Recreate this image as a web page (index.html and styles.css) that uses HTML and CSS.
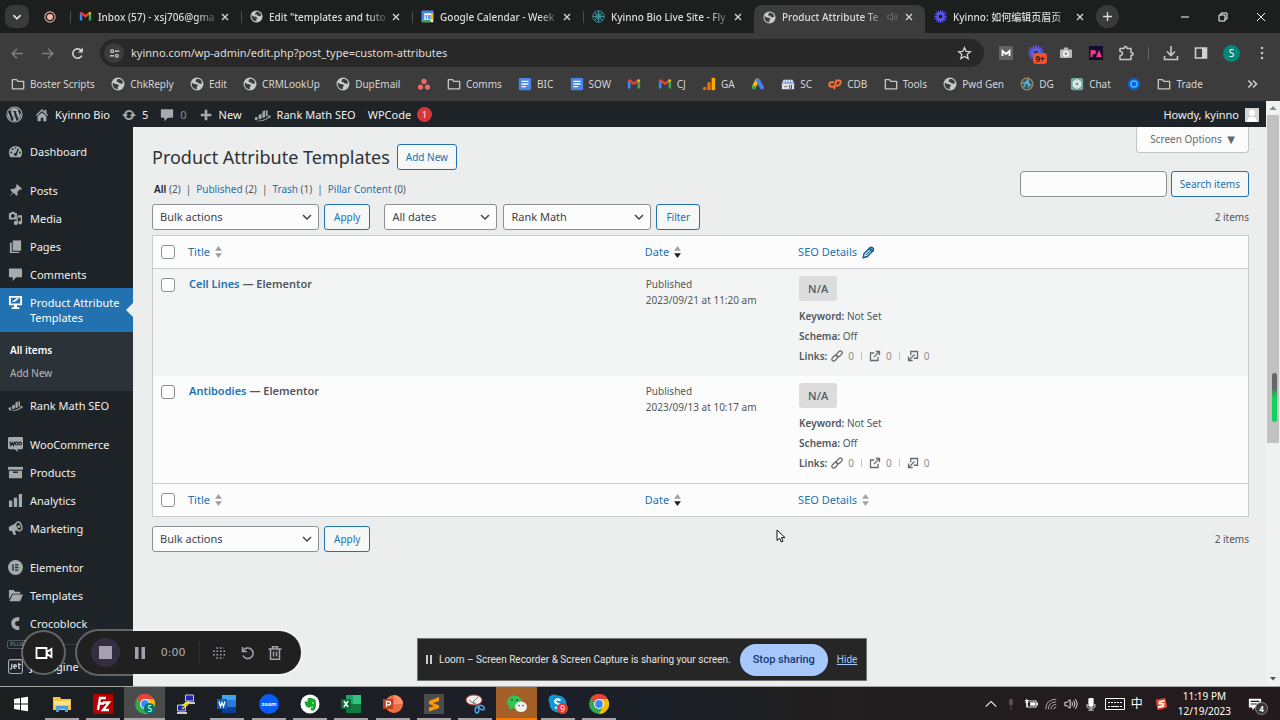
FILE: index.html
```html
<!DOCTYPE html>
<html lang="en">
<head>
  <meta charset="UTF-8" />
  <meta name="viewport" content="width=device-width, initial-scale=1.0"/>
  <title>Product Attribute Templates</title>
  <link rel="stylesheet" href="styles.css">
</head>
<body>
  <!-- Shared icons -->
  <svg class="sprite" aria-hidden="true">
    <symbol id="globe" viewBox="0 0 16 16"><circle cx="8" cy="8" r="7.4" fill="#c7cacb"/><path d="M2.2 6.2 4.6 8l3 .3 1.600 1.800-1.500 1.200.2 2.600c-3.500 0-6-2.600-6-5.700zM7.200 2.200h3.200l2.600 2.200.8 2.600-1.800.8-2.400-.8-1.400-1.400-2 .2z" fill="#3c3c3c"/></symbol>
    <symbol id="folder" viewBox="0 0 16 16"><path d="M1.500 3h4.800l1.500 2h6.700v8.500h-13z" fill="none" stroke="#c7c7c7" stroke-width="1.500" stroke-linejoin="round"/></symbol>
    <symbol id="gmail" viewBox="0 0 16 16"><path d="M1 13V4l3 2.300V13z" fill="#4285f4"/><path d="M15 13V4l-3 2.300V13z" fill="#34a853"/><path d="M1 4.500C1 2.500 3 2 4.200 3L8 5.900 11.800 3 12 6.300 8 9.400 4 6.300 1 4.500z" fill="#ea4335"/><path d="M11.800 3C13 2 15 2.500 15 4.500l-3 2z" fill="#fbbc04"/></symbol>
    <symbol id="doc" viewBox="0 0 16 16"><rect x="1" y="1" width="14" height="14" rx="1.500" fill="#4a86e8"/><path d="M4 5h8M4 8h8M4 11h5" stroke="#fff" stroke-width="1.600"/></symbol>
    <symbol id="close" viewBox="0 0 10 10"><path d="m2 2 6 6m0-6L2 8" stroke="#d8d8d8" stroke-width="1.300"/></symbol>
    <symbol id="burst" viewBox="0 0 16 16"><g stroke="#625df5" stroke-width="1.500" stroke-linecap="round"><path d="M8 1v4M8 11v4M1 8h4M11 8h4M3 3l2.800 2.800M10.200 10.200 13 13M3 13l2.800-2.800M10.200 5.800 13 3M5.300 1.500l1.500 3.700M9.200 10.800l1.500 3.700M1.500 10.700l3.700-1.500M10.800 6.800l3.700-1.500M1.500 5.300l3.700 1.500M10.800 9.200l3.700 1.500M5.300 14.500l1.500-3.700M9.200 5.200l1.500-3.700"/></g></symbol>
    <symbol id="rank" viewBox="0 0 20 16"><path d="M1 14v-3l3-1v4zM5.500 13V8L9 6.500V12zM10 11.500V4l3-1.500v8zM14 10V3l2-1v7z"/><path d="M1 15c7 0 12-1.500 16-5l-1-1 3.500-.5L19 12l-1-1c-4 3.500-9 5-17 4z"/></symbol>
    <symbol id="comment" viewBox="0 0 16 16"><path d="M2 1.500h12q1 0 1 1V10q0 1-1 1H9l-4 4v-4H2q-1 0-1-1V2.500q0-1 1-1z"/></symbol>
    <symbol id="sort" viewBox="0 0 8 14"><path class="sort-up" d="M4 0 8 5.500H0z"/><path d="M4 14 0 8.500h8z"/></symbol>
    <symbol id="link" viewBox="0 0 16 16"><g fill="none" stroke="#666a6d" stroke-width="1.700"><rect x="6.500" y="2.700" width="9" height="5" rx="2.500" transform="rotate(-45 11 5.200)"/><rect x=".5" y="8.300" width="9" height="5" rx="2.500" transform="rotate(-45 5 10.800)"/></g></symbol>
    <symbol id="external" viewBox="0 0 16 16"><path d="M7 4H2v10h10V9M9 2h5v5M14 2 6.500 9.500" fill="none" stroke="#666a6d" stroke-width="1.700"/></symbol>
    <symbol id="incoming" viewBox="0 0 16 16"><path d="M5 7V2h9v9H9M2 8.500V14h5.500M2.500 13.500 10 6" fill="none" stroke="#666a6d" stroke-width="1.700"/></symbol>
    <symbol id="chrome" viewBox="0 0 20 20"><circle cx="10" cy="10" r="10" fill="#34a853"/><path d="M10 10 1.300 5A10 10 0 0 1 18.700 5z" fill="#ea4335"/><path d="M10 5h8.700A10 10 0 0 1 10 20l4.300-7.500z" fill="#fbbc04"/><circle cx="10" cy="10" r="5" fill="#fff"/><circle cx="10" cy="10" r="3.900" fill="#4285f4"/></symbol>
  </svg>

  <!-- Tab strip -->
  <div class="tab-strip">
    <button class="tab-search" aria-label="Search tabs"><svg viewBox="0 0 10 10"><path d="m2 3.500 3 3 3-3" fill="none" stroke="#ddd" stroke-width="1.500"/></svg></button>
    <div class="pinned"><svg viewBox="0 0 16 16"><circle cx="8" cy="8" r="6.800" fill="none" stroke="#e8a5a0" stroke-width="1.500"/><circle cx="8" cy="8" r="4" fill="#f1b4ae"/></svg></div>
    <div class="tab"><svg class="fav"><use href="#gmail"/></svg><span class="tab-title">Inbox (57) - xsj706@gma</span><button aria-label="Close"><svg><use href="#close"/></svg></button></div>
    <div class="tab"><svg class="fav"><use href="#globe"/></svg><span class="tab-title">Edit "templates and tuto</span><button aria-label="Close"><svg><use href="#close"/></svg></button></div>
    <div class="tab"><svg class="fav" viewBox="0 0 16 16"><path d="M1 1h14v14H1z" fill="#fff"/><path d="M1 1h14v3H1zM1 1h3v11H1z" fill="#4285f4"/><path d="M12 4h3v8h-3z" fill="#fbbc04"/><path d="M1 12h11v3H1z" fill="#34a853"/><text x="4" y="11" font-size="7" font-weight="700" fill="#1967d2">18</text></svg><span class="tab-title">Google Calendar - Week</span><button aria-label="Close"><svg><use href="#close"/></svg></button></div>
    <div class="tab"><svg class="fav" viewBox="0 0 16 16" fill="none" stroke="#47a7b3"><circle cx="8" cy="8" r="7"/><circle cx="8" cy="8" r="3.500"/><path d="M8 1v14M1 8h14M3 3l10 10M3 13 13 3"/></svg><span class="tab-title">Kyinno Bio Live Site - Fly</span><button aria-label="Close"><svg><use href="#close"/></svg></button></div>
    <div class="tab tab-active"><svg class="fav"><use href="#globe"/></svg><span class="tab-title">Product Attribute Te</span><svg class="audio" viewBox="0 0 14 12" fill="none" stroke="#777"><path d="M1 4h2.500L7 1v10L3.500 8H1zM9 4q1.500 2 0 4M11 2q3 4 0 8"/></svg><button aria-label="Close"><svg><use href="#close"/></svg></button></div>
    <div class="tab tab-last"><svg class="fav"><use href="#burst"/></svg><span class="tab-title">Kyinno: 如何编辑页眉页</span><button aria-label="Close"><svg><use href="#close"/></svg></button></div>
    <button class="new-tab" aria-label="New tab"><svg viewBox="0 0 10 10"><path d="M5 1v8M1 5h8" stroke="#ddd" stroke-width="1.200"/></svg></button>
    <div class="window-buttons">
      <button aria-label="Minimize"><svg viewBox="0 0 10 10"><path d="M1 5h8" stroke="#fff"/></svg></button>
      <button aria-label="Restore"><svg viewBox="0 0 10 10" fill="none" stroke="#fff"><path d="M1 3h6v6H1zM3 3V1h6v6H7"/></svg></button>
      <button aria-label="Close window"><svg viewBox="0 0 10 10"><path d="m1 1 8 8m0-8L1 9" stroke="#fff"/></svg></button>
    </div>
  </div>

  <!-- Address bar -->
  <div class="toolbar">
    <div class="nav-buttons">
      <button aria-label="Back"><svg viewBox="0 0 14 14"><path d="M12 7H2m4.500-4.500L2 7l4.500 4.500" fill="none" stroke="#808080" stroke-width="1.400"/></svg></button>
      <button aria-label="Forward"><svg viewBox="0 0 14 14"><path d="M2 7h10M7.500 2.500 12 7l-4.500 4.500" fill="none" stroke="#808080" stroke-width="1.400"/></svg></button>
      <button aria-label="Reload"><svg viewBox="0 0 14 14"><path d="M11 9A4.400 4.400 0 1 1 10.500 4.300" fill="none" stroke="#d0d0d0" stroke-width="1.500"/><path d="M12 1.500V6H7.500z" fill="#d0d0d0"/></svg></button>
    </div>
    <div class="omnibox">
      <span class="site-info"><svg viewBox="0 0 14 14" fill="none" stroke="#ddd" stroke-width="1.400"><circle cx="4" cy="4" r="1.800"/><circle cx="10" cy="10" r="1.800"/><path d="M7.500 4H13M1 10h5.500"/></svg></span>
      <input type="text" aria-label="Address" value="kyinno.com/wp-admin/edit.php?post_type=custom-attributes">
      <svg viewBox="0 0 16 16"><path d="m8 1.800 1.800 4 4.400.4-3.300 2.900 1 4.300L8 11.100l-3.900 2.300 1-4.300-3.300-2.900 4.400-.4z" fill="none" stroke="#d0d0d0" stroke-width="1.400"/></svg>
    </div>
    <div class="extensions">
      <svg viewBox="0 0 16 16"><path d="M1 1h14v14H1z" fill="#5f6368"/><path d="M4.500 11V6L8 9l3.500-3v5" fill="none" stroke="#fff" stroke-width="1.800"/></svg>
      <span class="ext-badge"><svg><use href="#burst"/></svg><b>9+</b></span>
      <svg viewBox="0 0 16 16"><path d="M3 4.500h2.500l.8-2h3.400l.8 2H13q1 0 1 1V12q0 1-1 1H3q-1 0-1-1V5.500q0-1 1-1z" fill="#b9b9b9"/><circle cx="8" cy="8.700" r="2.300" fill="#999" stroke="#fff" stroke-width="1.400"/></svg>
      <svg viewBox="0 0 16 16"><path d="M1 1h14v14H1z" fill="#140a33"/><path d="M2.500 12V5H6q2 0 2 2t-2 2.500H4.500V12zM8 12l3-7 3 7z" fill="#f03e78"/></svg>
      <svg viewBox="0 0 16 16"><path d="M2 3.500h4q0-2 1.500-2t1.500 2h4v4q2 0 2 1.500t-2 1.500v4H2v-4q2.500 0 2.500-2T2 6.500z" fill="none" stroke="#c7c7c7" stroke-width="1.500" stroke-linejoin="round"/></svg>
      <i></i>
      <svg viewBox="0 0 16 16"><path d="M8 1v9M4 6.500 8 10.500l4-4M1.500 11v3.500h13V11" fill="none" stroke="#c7c7c7" stroke-width="1.600"/></svg>
      <svg viewBox="0 0 16 16"><path d="M2.500 3h11v10h-11z" fill="none" stroke="#d0d0d0" stroke-width="1.600"/><path d="M9 3h4.500v10H9z" fill="#d0d0d0"/></svg>
      <span class="profile">S</span>
      <svg viewBox="0 0 16 16" fill="#c7c7c7"><circle cx="8" cy="3" r="1.300"/><circle cx="8" cy="8" r="1.300"/><circle cx="8" cy="13" r="1.300"/></svg>
    </div>
  </div>

  <!-- Bookmarks -->
  <nav class="bookmarks">
    <div class="bookmark-list">
      <a href="#"><svg><use href="#folder"/></svg>Boster Scripts</a>
      <a href="#"><svg><use href="#globe"/></svg>ChkReply</a>
      <a href="#"><svg><use href="#globe"/></svg>Edit</a>
      <a href="#"><svg><use href="#globe"/></svg>CRMLookUp</a>
      <a href="#"><svg><use href="#globe"/></svg>DupEmail</a>
      <a href="#" aria-label="Asana"><svg viewBox="0 0 16 16" fill="#f06a6a"><circle cx="8" cy="5" r="3"/><circle cx="4" cy="11.500" r="3"/><circle cx="12" cy="11.500" r="3"/></svg></a>
      <a href="#"><svg><use href="#folder"/></svg>Comms</a>
      <a href="#"><svg><use href="#doc"/></svg>BIC</a>
      <a href="#"><svg><use href="#doc"/></svg>SOW</a>
      <a href="#" aria-label="Gmail"><svg><use href="#gmail"/></svg></a>
      <a href="#"><svg><use href="#gmail"/></svg>CJ</a>
      <a href="#"><svg viewBox="0 0 16 16"><path d="M11 1h4v14h-4z" fill="#f9ab00"/><path d="M6 6h4v9H6z" fill="#e37400"/><circle cx="3" cy="13" r="2" fill="#e37400"/></svg>GA</a>
      <a href="#" aria-label="Ads"><svg viewBox="0 0 16 16" stroke-width="4.500" stroke-linecap="round"><path d="M7 4 3.500 11" stroke="#fbbc04"/><path d="m8 4 4.500 8" stroke="#4285f4"/><circle cx="3.500" cy="12" r="2.300" fill="#34a853" stroke="none"/></svg></a>
      <a href="#"><svg viewBox="0 0 16 16"><path d="M3 3h10l2 4v7H1V7z" fill="#dfe3e8"/><path d="M1 7h14M5 4v3M8 4v3M11 4v3" stroke="#4a86e8"/><path d="M10 9v5M12 9v5M4 11h3" stroke="#444"/></svg>SC</a>
      <a href="#"><svg viewBox="0 0 16 16" fill="none" stroke="#ff6c2c" stroke-width="2.300"><path d="M7 6H4Q1.500 6 1.500 8.500T4 11h2.500M7 14l2.500-10h2.500q3 0 2.500 2.500T11 10H9.500"/></svg>CDB</a>
      <a href="#"><svg><use href="#folder"/></svg>Tools</a>
      <a href="#"><svg><use href="#globe"/></svg>Pwd Gen</a>
      <a href="#"><svg viewBox="0 0 16 16"><circle cx="8" cy="8" r="6.800" fill="#30596a" stroke="#b98d52" stroke-width="1.200"/><path d="M4 12 9 3l1 9M3 7q5-2 10 3" fill="none" stroke="#69b5c7" stroke-width="1.500"/></svg>DG</a>
      <a href="#"><svg viewBox="0 0 16 16"><rect x="1" y="1" width="14" height="14" rx="2" fill="#74aa9c"/><g fill="none" stroke="#fff"><ellipse cx="8" cy="8" rx="2.500" ry="5"/><ellipse cx="8" cy="8" rx="2.500" ry="5" transform="rotate(60 8 8)"/><ellipse cx="8" cy="8" rx="2.500" ry="5" transform="rotate(120 8 8)"/></g></svg>Chat</a>
      <a href="#" aria-label="Circle"><svg viewBox="0 0 16 16"><circle cx="8" cy="8" r="7" fill="#0b62d6"/><circle cx="8" cy="8" r="3.500" fill="none" stroke="#47b5ff" stroke-width="1.800"/></svg></a>
      <a href="#"><svg><use href="#folder"/></svg>Trade</a>
    </div>
    <button aria-label="More bookmarks"><svg viewBox="0 0 12 12"><path d="m2 3 3 3-3 3m4-6 3 3-3 3" fill="none" stroke="#ccc" stroke-width="1.400"/></svg></button>
  </nav>

  <div class="viewport">
    <div class="page">
      <!-- WordPress admin bar -->
      <header class="adminbar">
        <a href="#" class="wp-logo" aria-label="WordPress"><svg viewBox="0 0 20 20"><circle cx="10" cy="10" r="8.900" fill="none" stroke="#a7aaad" stroke-width="1.300"/><path d="M2.800 7A7.800 7.800 0 0 0 6.600 17zM4 5.200A7.800 7.800 0 0 1 15 4.200q-1.300 1.500 0 3.300 1.200 2 .3 4.500l-1 3-3-8.600h1V5.800H8v.6h1l1.200 3.300-1.700 5.300-3-8.600h1v-.6zM10.200 11l2.400 6.500a7.800 7.800 0 0 1-4.700.1zM17 7a7.800 7.800 0 0 1-3 9.700l2.600-7.200q.6-1.500.4-2.500z" fill="#a7aaad"/></svg></a>
        <a href="#"><svg viewBox="0 0 16 16"><path d="M8 1 1 8l1 1 6-5.500L14 9l1-1-2-2V2h-2v2z"/><path d="M3 9.500 8 5l5 4.500V15H9.500v-4h-3v4H3z"/></svg>Kyinno Bio</a>
        <a href="#"><svg viewBox="0 0 16 16"><path d="M3.500 8a4.600 4.600 0 0 1 8.500-2.500M12.500 8A4.600 4.600 0 0 1 4 10.500" fill="none" stroke="#a7aaad" stroke-width="2.200"/><path d="M0 7h7l-3.500 4.500zM9 9h7l-3.500-4.500z"/></svg>5</a>
        <a href="#" class="dim"><svg><use href="#comment"/></svg>0</a>
        <a href="#"><svg viewBox="0 0 16 16"><path d="M6.500 2h3v4.500H14v3H9.500V14h-3V9.500H2v-3h4.500z"/></svg>New</a>
        <a href="#"><svg class="wide"><use href="#rank"/></svg>Rank Math SEO</a>
        <a href="#">WPCode<b>1</b></a>
        <a href="#" class="howdy">Howdy, kyinno<svg viewBox="0 0 16 16"><path d="M0 0h16v16H0z" fill="#d5d5d5"/><circle cx="8" cy="5.500" r="3.500" fill="#fff"/><path d="M2.500 16q0-6 5.500-6t5.500 6z" fill="#fff"/></svg></a>
      </header>

      <div class="admin">
        <ul class="menu">
          <li><a href="#"><svg viewBox="0 0 16 16"><path d="M8 2a7 7 0 0 0-7 7q0 3 1.500 5h11Q15 12 15 9a7 7 0 0 0-7-7z"/><path d="m11 5-2 5.500" stroke="#1d2327" stroke-width="1.500"/><g fill="#1d2327"><circle cx="8" cy="11" r="1.700"/><circle cx="3.500" cy="9" r="1"/><circle cx="5" cy="5.500" r="1"/><circle cx="8" cy="4" r=".9"/><circle cx="12.800" cy="9" r="1"/></g></svg>Dashboard</a></li>
          <li class="gap"><a href="#"><svg viewBox="0 0 16 16"><path d="m9.500 1 5.500 5.500-1.500.8-1-.3-2.500 2.500.3 3-1.300 1-3-3-5 4.500L5 10 2.500 7.500l1-1.300 3 .3L9 4l-.3-1.500z"/></svg>Posts</a></li>
          <li><a href="#"><svg viewBox="0 0 16 16"><path fill-rule="evenodd" d="M1 2h2l.7-1.200h3L7.500 2h2v7H1zM5.200 3.300a2 2 0 1 0 0 4 2 2 0 0 0 0-4z"/><path d="M10.500 4.500H15v8a2 2 0 1 1-1.500-2V7h-3v6a2.200 2.200 0 1 1-1.500-2.300z"/></svg>Media</a></li>
          <li><a href="#"><svg viewBox="0 0 16 16"><path d="M5 1.500h9v11H5z"/><path d="M2 4h2v9.500h8V15H2z"/></svg>Pages</a></li>
          <li><a href="#"><svg><use href="#comment"/></svg>Comments</a></li>
          <li class="current"><a href="#"><svg viewBox="0 0 16 16"><path fill-rule="evenodd" d="M1 1h14v10H9.500v2H12v2H4v-2h2.500v-2H1zM3 3v6h10V3z"/><path d="m4 7.500 5-4h3l-5 4z"/></svg><span>Product Attribute Templates</span></a>
            <ul class="submenu">
              <li><a href="#" class="on">All items</a></li>
              <li><a href="#">Add New</a></li>
            </ul>
          </li>
          <li><a href="#"><svg><use href="#rank"/></svg>Rank Math SEO</a></li>
          <li class="gap"><a href="#"><svg viewBox="0 0 16 16"><path d="M1.500 0h13Q16 0 16 1.500v10q0 1.500-1.500 1.500H10l1 3-4-3H1.500Q0 13 0 11.500v-10Q0 0 1.500 0z"/><path d="m2 5 1 4 1.500-3L6 9l1-4" fill="none" stroke="#1d2327" stroke-width="1.300"/><g fill="none" stroke="#1d2327" stroke-width="1.200"><circle cx="9.300" cy="7" r="1.500"/><circle cx="13" cy="7" r="1.500"/></g></svg>WooCommerce</a></li>
          <li><a href="#"><svg viewBox="0 0 16 16"><path d="M0 2h16v3H0z"/><path fill-rule="evenodd" d="M1 6h14v8H1zM5.500 7v1.500h5V7z"/></svg>Products</a></li>
          <li><a href="#"><svg viewBox="0 0 16 16"><path d="M1 8h3.500v7H1zM6.200 5h3.500v10H6.200zM11.500 1H15v14h-3.500z"/></svg>Analytics</a></li>
          <li><a href="#"><svg viewBox="0 0 16 16"><path d="M1 6q-1 3 1 5l2-.5 2 4.500h2.500L7.500 10l4.500 0L9 2z"/><ellipse cx="11.500" cy="5.800" rx="3" ry="4.800" transform="rotate(-18 11.500 5.800)" fill="#1d2327" stroke="#a7aaad" stroke-width="1.500"/><circle cx="11.500" cy="6" r="1.500"/></svg>Marketing</a></li>
          <li class="gap"><a href="#"><svg viewBox="0 0 16 16"><circle cx="8" cy="8" r="8"/><path d="M5.300 4.500v7M7.500 5.200H11M7.500 8H11M7.500 10.800H11" stroke="#1d2327" stroke-width="1.400"/></svg>Elementor</a></li>
          <li><a href="#"><svg viewBox="0 0 16 16"><path d="M1 2h5l1.500 2H13v2H4.500L1 12z"/><path d="M5 7h11l-3 7H1.500z"/></svg>Templates</a></li>
          <li><a href="#"><svg viewBox="0 0 16 16"><path d="M12 3Q5.500 3 5.500 8t6.500 5" fill="none" stroke="#a7aaad" stroke-width="4"/></svg>Crocoblock</a></li>
          <li class="plugins"><span>PLUGINS</span></li>
          <li><a href="#"><svg viewBox="0 0 16 16"><rect x=".6" y=".6" width="14.800" height="14.800" rx="2" fill="none" stroke="#a7aaad" stroke-width="1.200"/><path d="M4 5v4q0 2-2 1.500M6 8h3q0-2-1.500-2T6 8t2 2.300M11.500 4v5q0 1.500 1.500 1M10.500 6H14" fill="none" stroke="#d0d2d4" stroke-width="1.300"/></svg>JetEngine</a></li>
        </ul>

        <main class="content">
          <div class="content-head">
            <div class="heading">
              <h1>Product Attribute Templates <button class="button">Add New</button></h1>
              <p class="views"><a href="#" class="on">All</a> (2)<i>|</i><a href="#">Published</a> (2)<i>|</i><a href="#">Trash</a> (1)<i>|</i><a href="#">Pillar Content</a> (0)</p>
            </div>
            <div class="head-side">
              <button class="screen-options">Screen Options <span>▼</span></button>
              <div class="search">
                <input type="search" aria-label="Search items">
                <button class="button">Search items</button>
              </div>
            </div>
          </div>

          <div class="tablenav">
            <select class="bulk" aria-label="Bulk actions"><option>Bulk actions</option></select>
            <button class="button">Apply</button>
            <select class="dates" aria-label="Dates"><option>All dates</option></select>
            <select class="seo-filter" aria-label="SEO filter"><option>Rank Math</option></select>
            <button class="button">Filter</button>
            <span class="count">2 items</span>
          </div>

          <table class="items">
            <thead>
              <tr>
                <th class="check"><input type="checkbox" aria-label="Select all"></th>
                <th><a href="#">Title<svg class="sort"><use href="#sort"/></svg></a></th>
                <th class="date"><a href="#">Date<svg class="sort sorted"><use href="#sort"/></svg></a></th>
                <th class="seo"><a href="#">SEO Details<svg class="pencil" viewBox="0 0 16 16"><path d="M2.500 9.500 10 2q1.500-1.200 3 .3t1 3.200L6.500 13 1.500 14.500z" fill="none" stroke="#135e96" stroke-width="1.800"/><path d="m8.500 3.500 4 4 1.500-1.500-4-4z" fill="#135e96" stroke="#135e96"/><path d="m5 11 5.500-5.500" stroke="#135e96" stroke-width="1.300"/></svg></a></th>
              </tr>
            </thead>
            <tbody>
              <tr>
                <td class="check"><input type="checkbox" aria-label="Select Cell Lines"></td>
                <td class="name"><a href="#">Cell Lines</a> — Elementor</td>
                <td>Published<br>2023/09/21 at 11:20 am</td>
                <td>
                  <span class="score">N/A</span>
                  <p><b>Keyword:</b> Not Set</p>
                  <p><b>Schema:</b> Off</p>
                  <p class="links"><b>Links:</b><svg><use href="#link"/></svg><span>0</span><i></i><svg><use href="#external"/></svg><span>0</span><i></i><svg><use href="#incoming"/></svg><span>0</span></p>
                </td>
              </tr>
              <tr>
                <td class="check"><input type="checkbox" aria-label="Select Antibodies"></td>
                <td class="name"><a href="#">Antibodies</a> — Elementor</td>
                <td>Published<br>2023/09/13 at 10:17 am</td>
                <td>
                  <span class="score">N/A</span>
                  <p><b>Keyword:</b> Not Set</p>
                  <p><b>Schema:</b> Off</p>
                  <p class="links"><b>Links:</b><svg><use href="#link"/></svg><span>0</span><i></i><svg><use href="#external"/></svg><span>0</span><i></i><svg><use href="#incoming"/></svg><span>0</span></p>
                </td>
              </tr>
            </tbody>
            <tfoot>
              <tr>
                <th class="check"><input type="checkbox" aria-label="Select all"></th>
                <th><a href="#">Title<svg class="sort"><use href="#sort"/></svg></a></th>
                <th><a href="#">Date<svg class="sort sorted"><use href="#sort"/></svg></a></th>
                <th><a href="#">SEO Details<svg class="sort"><use href="#sort"/></svg></a></th>
              </tr>
            </tfoot>
          </table>

          <div class="tablenav bottom">
            <select class="bulk" aria-label="Bulk actions"><option>Bulk actions</option></select>
            <button class="button">Apply</button>
            <span class="count">2 items</span>
          </div>
        </main>
      </div>
    </div>

    <div class="scrollbar">
      <svg viewBox="0 0 14 14"><path d="m3.500 9 3.500-4 3.500 4z" fill="#8a8a8a"/></svg>
      <div class="thumb"></div>
      <svg viewBox="0 0 14 14"><path d="m4 5 3 3.500L10 5z" fill="#505050"/></svg>
    </div>

    <!-- Volume meter of the recorder -->
    <div class="meter"></div>

    <div class="recorder">
      <button class="camera" aria-label="Camera"><svg viewBox="0 0 18 14"><path d="M1.500 2h10v10h-10zM12 6l4.500-3v8L12 8z" fill="none" stroke="#fff" stroke-width="1.800"/></svg></button>
      <div class="controls">
        <button class="stop" aria-label="Stop"><i></i></button>
        <button aria-label="Pause"><svg viewBox="0 0 14 14"><path d="M2 1h3.500v12H2zM8.500 1H12v12H8.500z" fill="#a5a0af"/></svg></button>
        <span class="time">0:00</span>
        <i class="divider"></i>
        <button aria-label="Effects"><svg viewBox="0 0 14 14"><path d="M0 5.200h14M0 8.800h14M3.300 2h7.400M3.300 12h7.400" stroke="#a5a0af" stroke-width="1.600" stroke-dasharray="1.600 1.900"/></svg></button>
        <button aria-label="Restart"><svg viewBox="0 0 14 14"><path d="M2 5a5.300 5.300 0 1 1 0 4.500M1.500 1v4.500H6" fill="none" stroke="#a5a0af" stroke-width="1.500"/></svg></button>
        <button aria-label="Delete"><svg viewBox="0 0 14 14"><path d="M.5 3h13M4.500 3V.8h5V3M2.500 3v10.200h9V3M5.500 5.500v5M8.500 5.500v5" fill="none" stroke="#a5a0af" stroke-width="1.500"/></svg></button>
      </div>
    </div>

    <div class="share-bar">
      <i class="grip"></i>
      <span>Loom – Screen Recorder &amp; Screen Capture is sharing your screen.</span>
      <button>Stop sharing</button>
      <a href="#">Hide</a>
    </div>

    <svg class="cursor" viewBox="0 0 10 14"><path d="M1 1v10.500l2.500-2.300L5.200 13l1.800-.8-1.600-3.600H9z" fill="#fff" stroke="#111"/></svg>
  </div>

  <!-- Taskbar -->
  <footer class="taskbar">
    <div class="apps">
      <button aria-label="Start"><svg viewBox="0 0 20 20" fill="#fff"><path d="m3 5 6-1v5.500H3zM10 3.800l7-1v6.700h-7zM3 10.500h6V16l-6-1zM10 10.500h7v6.700l-7-1z"/></svg></button>
      <button class="open" aria-label="Files"><svg viewBox="0 0 20 20"><path d="M1 3h7l1 2h10v11H1z" fill="#f6c445"/><path d="M2 7h16v4H2z" fill="#ffe08a"/><path d="M4 18v-6h12v6h-3v-3H7v3z" fill="#4a9fdc"/></svg></button>
      <button class="open" aria-label="FileZilla"><svg viewBox="0 0 20 20"><path d="M0 0h20v20H0z" fill="#b40000"/><path d="M5 16 7 4h6M6 9.500h5M10 8.500h6l-6 7.500h6" fill="none" stroke="#fff" stroke-width="2.300"/></svg></button>
      <button class="open active" aria-label="Chrome"><svg viewBox="0 0 20 20"><use href="#chrome"/><circle cx="14.500" cy="14.500" r="5.500" fill="#00796b"/><text x="12.500" y="17.500" font-size="8" fill="#fff">S</text></svg></button>
      <button aria-label="PuTTY"><svg viewBox="0 0 20 20" stroke="#ccc"><path d="M9.500 1h8v6h-8zM1.500 11h8v6h-8z" fill="#1d24b8"/><path d="M9 9h10M1 19h10" stroke-width="2"/><path d="m13 7-6 4 4 0-5 4" fill="none" stroke="#f7e225" stroke-width="1.500"/></svg></button>
      <button class="open" aria-label="Word"><svg viewBox="0 0 20 20"><path d="M5 1h14v18H5z" fill="#2b7cd3"/><path d="M5 1h14v5H5z" fill="#41a5ee"/><path d="M5 13h14v6H5z" fill="#103f91"/><path d="M0 5h10v10H0z" fill="#185abd"/><path d="m2 7.500 1.500 5L5 8.500l1.500 4 1.500-5" fill="none" stroke="#fff" stroke-width="1.300"/></svg></button>
      <button class="open" aria-label="Zoom"><svg viewBox="0 0 20 20"><circle cx="10" cy="10" r="10" fill="#0b5cff"/><text x="2.500" y="12" font-size="5.500" font-weight="700" fill="#fff">zoom</text></svg></button>
      <button class="open" aria-label="Evernote"><svg viewBox="0 0 20 20"><circle cx="10" cy="10" r="9.500" fill="#fff"/><path d="M4.500 7.500h3.200V4.200q3-1.200 4.800.3 3 .2 3.300 2.500.8 5-.8 8.500-1.200 1.500-3.500 1-1.500-.7-.8-2.300.8-1.200 2.300-.7l.2-1q-2 0-2.500.5-1 1-2.500.5-3-.5-3.700-6z" fill="#16a82e"/><circle cx="13" cy="9" r=".8" fill="#fff"/></svg></button>
      <button class="open" aria-label="Excel"><svg viewBox="0 0 20 20"><path d="M5 1h15v18H5z" fill="#21a366"/><path d="M5 10h15v9H5z" fill="#107c41"/><path d="M12 1h8v9h-8z" fill="#33c481"/><path d="M0 5h10v10H0z" fill="#0b6a35"/><path d="m2.800 7 4.400 6m0-6-4.400 6" stroke="#fff" stroke-width="1.500"/></svg></button>
      <button class="open" aria-label="PowerPoint"><svg viewBox="0 0 20 20"><circle cx="11" cy="10" r="9" fill="#ed6c47"/><path d="M11 1a9 9 0 0 1 9 9h-9z" fill="#ff8f6b"/><path d="M0 5h10v10H0z" fill="#c43e1c"/><path d="M3.500 13V7.500h2q2 0 2 1.700t-2 1.700h-2" fill="none" stroke="#fff" stroke-width="1.300"/></svg></button>
      <button class="open" aria-label="Sublime"><svg viewBox="0 0 20 20"><path d="M0 0h20v20H0z" fill="#4b4b4b"/><path d="m5 7 10-4v4L9 9.300l6 2V14L5 17.500v-4l5-1.500-5-2z" fill="#ff9800"/></svg></button>
      <button class="open" aria-label="Snip"><svg viewBox="0 0 20 20"><ellipse cx="9" cy="6" rx="8" ry="5" fill="#f5eeee" stroke="#c44"/><path d="m13 3-5 5 6 4M4 6l8 6" fill="none" stroke="#777"/><g fill="none" stroke="#4aa2e8" stroke-width="1.500"><ellipse cx="12" cy="16" rx="1.800" ry="3"/><ellipse cx="16.500" cy="13.500" rx="3" ry="1.800" transform="rotate(30 16.500 13.500)"/></g></svg></button>
      <button class="open alert" aria-label="WeChat"><svg viewBox="0 0 20 20"><ellipse cx="7.500" cy="8" rx="7.300" ry="6.500" fill="#2dc653"/><path d="m3 12-1 4 4-2z" fill="#2dc653"/><ellipse cx="14" cy="12.800" rx="6" ry="5.200" fill="#f2f2f2"/><g fill="#145c26"><circle cx="5" cy="6" r="1"/><circle cx="10" cy="6" r="1"/><circle cx="12" cy="11.500" r=".8"/><circle cx="16" cy="11.500" r=".8"/></g></svg></button>
      <button class="open" aria-label="Skype"><svg viewBox="0 0 20 20"><circle cx="6" cy="6" r="5.500" fill="#1094d8"/><circle cx="10" cy="10" r="8.500" fill="#1094d8"/><path d="M12.500 6.500Q10 4.500 8 6t0 3l3.500 1.500q2 1.500 0 3t-4.500-.5" fill="none" stroke="#fff" stroke-width="2"/><circle cx="14.500" cy="14.500" r="5.500" fill="#e03c31"/><text x="12.300" y="17.500" font-size="8" fill="#fff">9</text></svg></button>
      <button class="open" aria-label="Chrome"><svg><use href="#chrome"/></svg></button>
    </div>
    <div class="tray">
      <svg viewBox="0 0 16 16"><path d="m2 11 6-6 6 6" fill="none" stroke="#fff" stroke-width="1.200"/></svg>
      <svg class="faint" viewBox="0 0 16 16"><rect x="6" y="2" width="4" height="8" rx="2" fill="#fff"/><path d="M8 11v4" stroke="#fff"/></svg>
      <svg viewBox="0 0 16 16"><path d="M4 4.500h10v7H4z" fill="none" stroke="#fff"/><path d="M7 6h6v4H7zM14.500 6.500H16v3h-1.500z" fill="#fff"/><path d="M1 4h4M3 2v10M1 6h4" stroke="#fff"/></svg>
      <svg viewBox="0 0 16 16" fill="none" stroke="#bbb"><path d="M2 14Q2 3 14 2.500M5 14q0-8 9-8.500M8 14q0-5 6-5.500M11 14q0-2 3-2.500"/></svg>
      <svg viewBox="0 0 16 16" fill="none" stroke="#fff"><path d="M1 6h2.500L7 3v10l-3.500-3H1zM9 6q1.500 2 0 4M11 4q3 4 0 8M13 2.500q4 5.500 0 11"/></svg>
      <svg viewBox="0 0 16 16"><rect x="5" y="1" width="6" height="10" rx="1.500" fill="#fff"/><path d="M3.500 8v3q0 1.500 2 1.500h5q2 0 2-1.500V8M8 12.500V15M5 15h6" fill="none" stroke="#fff"/></svg>
      <svg class="keyboard" viewBox="0 0 20 12" fill="none" stroke="#fff"><path d="M.5.500h19v11H.5z"/><path d="M3 4.500h14" stroke-dasharray="2 1"/><path d="M3 8.500h2m1 0h8m1 0h2"/></svg>
      <span class="ime">中</span>
      <svg viewBox="0 0 16 16"><path d="m2 3 11-2 2 11-11 3z" fill="#e8452c"/><path d="M12 4.500 6.500 5.500 6 7.500l5 .5-.5 2.500-6 1" fill="none" stroke="#fff" stroke-width="2"/></svg>
      <span class="clock">11:19 PM<br>12/19/2023</span>
      <span class="notices"><svg viewBox="0 0 16 16"><path d="M1 2h14v10H8l-3 3v-3H1z" fill="#fff"/><path d="M3 5h10M3 8h7" stroke="#221c1e" stroke-width="1.300"/></svg><b>4</b></span>
    </div>
  </footer>
</body>
</html>
```
FILE: styles.css
```css
* {
  box-sizing: border-box;
}
body {
  margin: 0;
  height: 100vh;
  display: flex;
  flex-direction: column;
  overflow: hidden;
  font-family: "Noto Sans", "Noto Sans CJK SC", sans-serif;
  font-size: 10px;
  line-height: 16px;
  color: #50575e;
  background: #3c3c3c;
}
button, input, select {
  font: inherit;
  color: inherit;
  margin: 0;
}
button {
  border: none;
  background: none;
  padding: 0;
  cursor: pointer;
}
svg {
  display: block;
  flex: none;
}
a {
  color: #2271b1;
  text-decoration: none;
}
ul, p, h1 {
  margin: 0;
  padding: 0;
  list-style: none;
}
.sprite {
  display: none;
}

/* tab strip */
.tab-strip {
  flex: 0 0 33px;
  display: flex;
  align-items: center;
  padding-left: 5px;
  background: #1d1f1e;
  color: #dcdcdc;
}
.tab-search {
  width: 24px;
  height: 23px;
  border-radius: 8px;
  background: #3a3a3a;
  display: grid;
  place-items: center;
}
.tab-search svg {
  width: 12px;
  height: 12px;
}
.pinned {
  width: 41px;
  padding-left: 15px;
}
.pinned svg {
  width: 12px;
  height: 12px;
}
.tab {
  height: 28px;
  flex: 0 1 171px;
  min-width: 0;
  display: flex;
  align-items: center;
  padding: 0 11px 0 9px;
  gap: 6px;
  background: linear-gradient(#4a4a4a, #4a4a4a) left center / 1px 12px no-repeat;
}
.fav {
  width: 13px;
  height: 13px;
}
.tab-title {
  flex: 1;
  min-width: 0;
  white-space: nowrap;
  font-weight: 500;
  -webkit-mask-image: linear-gradient(to right, #000 85%, transparent 105%);
  mask-image: linear-gradient(to right, #000 85%, transparent 105%);
}
.tab button, .tab button svg {
  width: 10px;
  height: 10px;
}
.audio {
  width: 11px;
  height: 10px;
}
.tab-active {
  align-self: flex-end;
  padding-bottom: 4px;
  background: #3c3c3c;
  border-radius: 8px 8px 0 0;
}
.tab-last {
  background: none;
}
.new-tab {
  width: 23px;
  height: 23px;
  border-radius: 50%;
  background: #3a3a3a;
  display: grid;
  place-items: center;
}
.new-tab svg {
  width: 11px;
  height: 11px;
}
.window-buttons {
  margin-left: auto;
  display: flex;
}
.window-buttons button {
  width: 38px;
  display: grid;
  place-items: center;
}
.window-buttons svg {
  width: 10px;
  height: 10px;
}

/* toolbar */
.toolbar {
  flex: 0 0 40px;
  display: flex;
  align-items: center;
  padding: 0 10px;
  background: #3c3c3c;
  gap: 14px;
}
.nav-buttons {
  display: flex;
  gap: 15px;
  width: 76px;
}
.nav-buttons svg {
  width: 15px;
  height: 15px;
}
.omnibox {
  flex: 1;
  height: 28px;
  border-radius: 14px;
  background: #282828;
  display: flex;
  align-items: center;
  gap: 7px;
  padding: 0 12px 0 4px;
  color: #dedede;
}
.omnibox input {
  flex: 1;
  border: none;
  padding: 0;
  background: none;
  font-size: 11px;
  outline: none;
}
.omnibox > svg {
  width: 15px;
  height: 15px;
}
.site-info {
  width: 20px;
  height: 20px;
  border-radius: 50%;
  background: #3c3c3c;
  display: grid;
  place-items: center;
}
.site-info svg {
  width: 11px;
  height: 11px;
}
.extensions {
  display: flex;
  align-items: center;
  justify-content: space-between;
  width: 272px;
}
.extensions svg {
  width: 16px;
  height: 16px;
}
.extensions > i {
  width: 1px;
  height: 13px;
  background: #666;
}
.ext-badge {
  position: relative;
}
.ext-badge b {
  position: absolute;
  left: 5px;
  top: 8px;
  width: 14px;
  border-radius: 3px;
  background: #f4502a;
  color: #222;
  font-size: 8px;
  line-height: 11px;
  text-align: center;
}
.profile {
  width: 17px;
  height: 17px;
  border-radius: 50%;
  background: #00897b;
  color: #fff;
  line-height: 17px;
  text-align: center;
}

/* bookmarks */
.bookmarks {
  flex: 0 0 28px;
  display: flex;
  align-items: center;
  justify-content: space-between;
  padding: 0 20px 6px 11px;
}
.bookmark-list {
  flex: 0 1 1192px;
  display: flex;
  justify-content: space-between;
}
.bookmarks a {
  display: flex;
  align-items: center;
  gap: 5px;
  color: #d5d5d5;
  white-space: nowrap;
}
.bookmarks svg {
  width: 14px;
  height: 14px;
}

/* page area */
.viewport {
  flex: 1;
  min-height: 0;
  display: flex;
  position: relative;
  border-bottom: 1px solid #a5a7a7;
  background: #eceeed;
}
.page {
  flex: 1;
  min-width: 0;
  display: flex;
  flex-direction: column;
  overflow: hidden;
}
.adminbar {
  flex: 0 0 26px;
  display: flex;
  align-items: center;
  gap: 12px;
  padding: 1px 7px 0 6px;
  background: #1d2327;
  font-size: 11px;
}
.adminbar a {
  display: flex;
  align-items: center;
  gap: 6px;
  color: #f0f0f1;
  white-space: nowrap;
}
.adminbar svg {
  width: 14px;
  height: 14px;
  fill: #a7aaad;
}
.adminbar .wp-logo svg {
  width: 17px;
  height: 17px;
}
.adminbar .wide {
  width: 17px;
}
.adminbar .dim {
  color: #8b8f93;
}
.adminbar b {
  width: 15px;
  border-radius: 50%;
  background: #d63638;
  font-size: 9px;
  line-height: 15px;
  font-weight: normal;
  text-align: center;
}
.adminbar .howdy {
  margin-left: auto;
}
.admin {
  flex: 1;
  min-height: 0;
  display: flex;
}

/* admin menu */
.menu {
  flex: 0 0 133px;
  padding-top: 10px;
  background: #1d2327;
  overflow: hidden;
}
.menu a {
  display: flex;
  align-items: center;
  gap: 7px;
  height: 28px;
  padding-left: 8px;
  font-size: 11px;
  line-height: 15px;
  color: #f0f0f1;
  white-space: nowrap;
}
.menu svg {
  width: 15px;
  height: 15px;
  fill: #a7aaad;
}
.menu .gap {
  margin-top: 11px;
}
.menu .current > a {
  position: relative;
  height: 44px;
  align-items: flex-start;
  padding-top: 7px;
  background: #2271b1;
  color: #fff;
  white-space: normal;
}
.menu .current > a::after {
  content: "";
  position: absolute;
  right: 0;
  top: 15px;
  border: 7px solid transparent;
  border-left: none;
  border-right-color: #eceeed;
}
.menu .current svg {
  fill: #fff;
}
.menu .submenu {
  background: #2c3338;
  padding: 7px 0 6px;
}
.menu .submenu a {
  height: 23px;
  padding-left: 10px;
  font-size: 10px;
  color: #b4b9be;
}
.menu .submenu .on {
  color: #fff;
  font-weight: 600;
}
.menu .plugins {
  display: flex;
  align-items: center;
  height: 15px;
  padding-left: 7px;
}
.plugins::after {
  content: "";
  flex: 1;
  height: 1px;
  background: #363c41;
}
.plugins span {
  padding: 0 2px;
  border: 1px solid #50565b;
  border-radius: 2px;
  color: #8b8f93;
  font-size: 6px;
  line-height: 7px;
}

/* content */
.content {
  flex: 1;
  min-width: 0;
  padding: 0 17px 0 19px;
}
.content-head {
  display: flex;
  justify-content: space-between;
}
.heading {
  padding-top: 17px;
}
h1 {
  display: flex;
  align-items: center;
  gap: 7px;
  font-size: 18px;
  line-height: 26px;
  font-weight: 400;
  color: #2c3338;
}
.button {
  height: 26px;
  padding: 0 8px;
  border: 1px solid #2271b1;
  border-radius: 3px;
  background: #f6f7f7;
  color: #2271b1;
  font-size: 10px;
  line-height: 16px;
  white-space: nowrap;
}
.views {
  margin-top: 11px;
  padding-left: 2px;
  white-space: nowrap;
}
.views .on {
  color: #1d2327;
  font-weight: 600;
}
.views i {
  margin: 0 5px;
  font-style: normal;
}
.head-side {
  display: flex;
  flex-direction: column;
  align-items: flex-end;
}
.screen-options {
  height: 26px;
  padding: 0 13px;
  border: 1px solid #c3c4c7;
  border-top: none;
  border-radius: 0 0 4px 4px;
  background: #fcfcfc;
  color: #646970;
}
.screen-options span {
  margin-left: 3px;
  font-family: "DejaVu Sans", sans-serif;
}
.search {
  display: flex;
  gap: 4px;
  margin-top: 18px;
}
.search input {
  width: 147px;
  height: 26px;
  border: 1px solid #8c8f94;
  border-radius: 4px;
  background: #fcfcfc;
}
.tablenav {
  display: flex;
  align-items: center;
  margin: 7px 0 5px;
}
.tablenav.bottom {
  margin-top: 9px;
}
.tablenav .button {
  padding: 0 9px;
}
select {
  height: 26px;
  padding: 0 18px 0 7px;
  border: 1px solid #8c8f94;
  border-radius: 3px;
  color: #3c434a;
  font-size: 11px;
  appearance: none;
  background: #fcfcfc url("data:image/svg+xml,%3Csvg xmlns='http://www.w3.org/2000/svg' viewBox='0 0 10 10'%3E%3Cpath d='m1 3 4 4 4-4' fill='none' stroke='%23444' stroke-width='1.500'/%3E%3C/svg%3E") right 6px center / 10px 10px no-repeat;
}
.bulk {
  width: 167px;
  margin-right: 5px;
}
.dates {
  width: 113px;
  margin: 0 6px 0 14px;
}
.seo-filter {
  width: 148px;
  margin-right: 5px;
}
.count {
  margin-left: auto;
}

/* list table */
.items {
  width: 100%;
  table-layout: fixed;
  border-collapse: separate;
  border-spacing: 0;
  border: 1px solid #c9cbcd;
  background: #fcfcfc;
}
.items th {
  height: 33px;
  padding: 0 10px;
  font-size: 11px;
  font-weight: 400;
  text-align: left;
}
.items th a {
  display: flex;
  align-items: center;
}
.items td {
  height: 107px;
  padding: 7px 11px 0;
  vertical-align: top;
}
.items thead th {
  border-bottom: 1px solid #c9cbcd;
}
.items tfoot th {
  border-top: 1px solid #c9cbcd;
}
.items tbody tr:nth-child(odd) {
  background: #f3f5f4;
}
.items .check {
  width: 25px;
  padding-left: 8px;
  padding-right: 0;
}
.items .date {
  width: 14%;
}
.items .seo {
  width: 42%;
}
input[type="checkbox"] {
  appearance: none;
  display: block;
  width: 14px;
  height: 14px;
  border: 1px solid #8c8f94;
  border-radius: 3px;
  background: #fff;
}
td input[type="checkbox"] {
  margin-top: 2px;
}
.items .name {
  font-size: 11px;
  font-weight: 600;
}
.sort {
  width: 7px;
  height: 12px;
  margin-left: 5px;
  fill: #a0a3a6;
}
.sorted {
  fill: #1d2327;
}
.sort-up {
  fill: #a0a3a6;
}
.pencil {
  width: 13px;
  height: 13px;
  margin-left: 5px;
}
.score {
  display: block;
  width: 38px;
  margin-bottom: 5px;
  border-radius: 3px;
  background: #dcdcdc;
  font-size: 11px;
  font-weight: 500;
  line-height: 25px;
  text-align: center;
}
.items p {
  line-height: 20px;
}
.items b {
  font-weight: 600;
}
.links {
  display: flex;
  align-items: center;
  color: #8c8f94;
}
.links b {
  color: #50575e;
  margin-right: 4px;
}
.links svg {
  width: 12px;
  height: 12px;
  margin-right: 5px;
}
.links i {
  width: 1px;
  height: 8px;
  margin: 0 7px;
  background: #c3c4c7;
}

/* scrollbar */
.scrollbar {
  flex: 0 0 14px;
  display: flex;
  flex-direction: column;
  background: #f0f1f1;
}
.scrollbar svg {
  width: 14px;
  height: 14px;
}
.scrollbar svg:last-child {
  margin-top: auto;
}
.thumb {
  height: 56%;
  margin: 0 1px;
  background: #c1c1c1;
}
.meter {
  position: absolute;
  right: 3px;
  top: 272px;
  width: 5px;
  height: 49px;
  border-radius: 3px;
  background: linear-gradient(#666 30%, #12d15e 50%);
}

/* floating recorder */
.recorder {
  position: absolute;
  left: 23px;
  bottom: 12px;
  display: flex;
  align-items: center;
  gap: 13px;
}
.camera, .controls {
  background: #202021;
  box-shadow: 0 0 0 2px rgba(255, 255, 255, .3);
}
.camera {
  width: 41px;
  height: 41px;
  border-radius: 50%;
  display: grid;
  place-items: center;
}
.camera svg {
  width: 18px;
  height: 14px;
}
.controls {
  width: 224px;
  height: 43px;
  border-radius: 22px;
  display: flex;
  align-items: center;
  justify-content: space-between;
  padding: 0 19px 0 14px;
}
.controls svg {
  width: 14px;
  height: 14px;
}
.stop {
  width: 29px;
  height: 29px;
  border-radius: 50%;
  background: #332e42;
  display: grid;
  place-items: center;
}
.stop i {
  width: 13px;
  height: 13px;
  background: #a5a0af;
}
.time {
  font-family: "DejaVu Sans", sans-serif;
  font-size: 11px;
  color: #b3afbb;
}
.divider {
  width: 1px;
  height: 23px;
  background: #2f2f31;
}

/* sharing bar */
.share-bar {
  position: absolute;
  left: 417px;
  bottom: 5px;
  height: 43px;
  display: flex;
  align-items: center;
  padding: 0 9px 0 8px;
  border: 1px solid #727272;
  background: #262626;
  color: #e3e3e3;
  font-family: Roboto, sans-serif;
  white-space: nowrap;
}
.grip {
  width: 6px;
  height: 9px;
  margin-right: 7px;
  border: solid #ccc;
  border-width: 0 2px;
}
.share-bar button {
  height: 32px;
  margin: 0 9px;
  padding: 0 13px;
  border-radius: 16px;
  background: #a8c7fa;
  color: #123a78;
  font-size: 11px;
  font-weight: 500;
}
.share-bar a {
  color: #a8c7fa;
  text-decoration: underline;
}
.cursor {
  position: absolute;
  left: 776px;
  top: 428px;
  width: 10px;
  height: 14px;
}

/* taskbar */
.taskbar {
  flex: 0 0 33px;
  display: flex;
  justify-content: space-between;
  background: linear-gradient(to right, #1c1e20, #1b1f29 50%, #201f20 62%, #241a1d);
  color: #fff;
}
.apps {
  flex: 0 0 620px;
  display: grid;
  grid-template-columns: repeat(15, 1fr);
}
.apps button {
  display: grid;
  place-items: center;
}
.apps svg {
  width: 20px;
  height: 20px;
}
.apps .open {
  background: linear-gradient(#a9a3a8, #a9a3a8) center bottom / 34px 2px no-repeat;
}
.apps .active {
  background-color: #4a4b4b;
  background-size: 100% 2px;
}
.apps .alert {
  background: linear-gradient(#ff7a00, #ff7a00) center bottom / 100% 2px no-repeat #a5602a;
}
.tray {
  display: flex;
  align-items: center;
  gap: 4px;
  padding-right: 17px;
}
.tray svg {
  width: 16px;
  height: 14px;
}
.tray .faint {
  opacity: .25;
}
.tray .keyboard {
  width: 20px;
  height: 12px;
  margin: 0 2px;
}
.ime {
  font-size: 12px;
}
.tray .ime + svg {
  margin-left: 6px;
}
.clock {
  margin: 0 12px 0 5px;
  line-height: 15px;
  text-align: center;
}
.notices {
  position: relative;
}
.notices b {
  position: absolute;
  left: 8px;
  top: 5px;
  width: 13px;
  border: 1px solid #888;
  border-radius: 50%;
  background: #3b3436;
  font-size: 8px;
  line-height: 11px;
  text-align: center;
}
```
